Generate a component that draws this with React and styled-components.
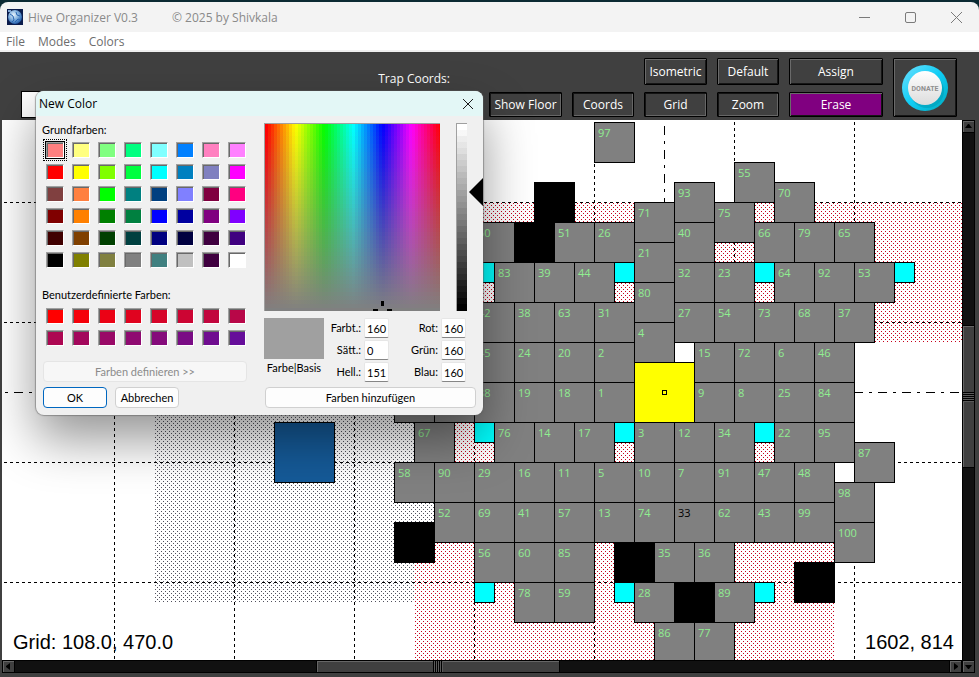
import React from "react";
import styled, { createGlobalStyle, css } from "styled-components";

const UI_FONT = `"Open Sans", "Noto Sans", sans-serif`;
const DIALOG_FONT = `Lato, "Open Sans", sans-serif`;
const CHROME = "#404040";

const GlobalStyle = createGlobalStyle`
  *, *::before, *::after { box-sizing: border-box; }
  html, body { margin: 0; padding: 0; background: #0b2a33; }
  button, input { font-family: inherit; font-size: inherit; margin: 0; }
`;

/* ---------- data ---------- */

const UNIT = 20;
const ORIGIN_X = 12;
const ORIGIN_Y = 2;

// [column, row, label]
const HIVES = [
  [29, 0, "97"], [36, 2, "55"], [33, 3, "93"], [38, 3, "70"],
  [31, 4, "71"], [35, 4, "75"],
  [23, 5, "50"], [27, 5, "51"], [29, 5, "26"], [33, 5, "40"], [37, 5, "66"], [39, 5, "79"], [41, 5, "65"],
  [31, 6, "21"],
  [24, 7, "83"], [26, 7, "39"], [28, 7, "44"], [33, 7, "32"], [35, 7, "23"], [38, 7, "64"], [40, 7, "92"], [42, 7, "53"],
  [31, 8, "80"],
  [23, 9, "42"], [25, 9, "38"], [27, 9, "63"], [29, 9, "31"], [33, 9, "27"], [35, 9, "54"], [37, 9, "73"], [39, 9, "68"], [41, 9, "37"],
  [31, 10, "4"],
  [23, 11, "45"], [25, 11, "24"], [27, 11, "20"], [29, 11, "2"], [34, 11, "15"], [36, 11, "72"], [38, 11, "6"], [40, 11, "46"],
  [19, 13, ""], [21, 13, ""], [23, 13, "88"], [25, 13, "19"], [27, 13, "18"], [29, 13, "1"], [34, 13, "9"], [36, 13, "8"], [38, 13, "25"], [40, 13, "84"],
  [20, 15, "67"], [24, 15, "76"], [26, 15, "14"], [28, 15, "17"], [31, 15, "3"], [33, 15, "12"], [35, 15, "34"], [38, 15, "22"], [40, 15, "95"],
  [42, 16, "87"],
  [19, 17, "58"], [21, 17, "90"], [23, 17, "29"], [25, 17, "16"], [27, 17, "11"], [29, 17, "5"], [31, 17, "10"], [33, 17, "7"], [35, 17, "91"], [37, 17, "47"], [39, 17, "48"],
  [41, 18, "98"],
  [21, 19, "52"], [23, 19, "69"], [25, 19, "41"], [27, 19, "57"], [29, 19, "13"], [31, 19, "74"], [33, 19, "33"], [35, 19, "62"], [37, 19, "43"], [39, 19, "99"],
  [41, 20, "100"],
  [23, 21, "56"], [25, 21, "60"], [27, 21, "85"], [32, 21, "35"], [34, 21, "36"],
  [25, 23, "78"], [27, 23, "59"], [31, 23, "28"], [35, 23, "89"],
  [32, 25, "86"], [34, 25, "77"],
];

const ROCKS = [[26, 3], [25, 5], [19, 20], [30, 21], [39, 22], [33, 23]];
const FLAGS = [
  [23, 7], [30, 7], [37, 7], [44, 7], [23, 15], [30, 15], [37, 15], [23, 23], [30, 23], [37, 23],
];

const BASE_COLORS = [
  "#ff8080", "#ffff80", "#80ff80", "#00ff80", "#80ffff", "#0080ff", "#ff80c0", "#ff80ff",
  "#ff0000", "#ffff00", "#80ff00", "#00ff40", "#00ffff", "#0080c0", "#8080c0", "#ff00ff",
  "#804040", "#ff8040", "#00ff00", "#008080", "#004080", "#8080ff", "#800040", "#ff0080",
  "#800000", "#ff8000", "#008000", "#008040", "#0000ff", "#0000a0", "#800080", "#8000ff",
  "#400000", "#804000", "#004000", "#004040", "#000080", "#000040", "#400040", "#400080",
  "#000000", "#808000", "#808040", "#808080", "#408080", "#c0c0c0", "#400040", "#ffffff",
];

const CUSTOM_COLORS = Array.from({ length: 16 }, (_, i) => {
  const t = i / 15;
  return `rgb(${Math.round(255 - 153 * t)}, ${Math.round(14 * t)}, ${Math.round(154 * t)})`;
});

const steps = (direction, count, size, colorAt) => {
  const stops = [];
  for (let i = 0; i < count; i += 1) {
    stops.push(`${colorAt(i / (count - 1))} ${i * size}px ${(i + 1) * size}px`);
  }
  return `linear-gradient(${direction}, ${stops.join(", ")})`;
};

const HUES = steps("to right", 59, 3, (t) => `hsl(${Math.round(t * 360)}, 100%, 50%)`);
const FADE = steps("to bottom", 47, 4, (t) => `rgba(128, 128, 128, ${t.toFixed(3)})`);
const LIGHTNESS = steps("to bottom", 31, 6, (t) => `hsl(0, 0%, ${Math.round((1 - t) * 100)}%)`);

/* ---------- window ---------- */

const Window = styled.div`
  position: relative;
  display: flex;
  flex-direction: column;
  height: 100vh;
  min-height: 480px;
  padding-top: 2px;
  overflow: hidden;
  background: #0b2a33;
  font-family: ${UI_FONT};
  font-size: 12px;
`;

const TitleBar = styled.header`
  display: flex;
  align-items: center;
  flex: none;
  height: 30px;
  padding-left: 7px;
  border-radius: 8px 8px 0 0;
  background: #f3f3f3;
  color: #8a8a8a;
`;

const AppTitle = styled.span`
  margin: 0 34px 0 5px;
  white-space: nowrap;
`;

const WindowButtons = styled.div`
  display: flex;
  margin-left: auto;
`;

const WindowButton = styled.button`
  display: grid;
  place-items: center;
  width: 46px;
  height: 28px;
  padding: 0;
  border: 0;
  background: transparent;
  color: #7a7a7a;
`;

const MenuBar = styled.nav`
  display: flex;
  align-items: center;
  gap: 13px;
  flex: none;
  height: 20px;
  padding: 2px 0 0 6px;
  border-bottom: 2px solid #f0f0f0;
  background: #fff;
`;

const MenuItem = styled.button`
  padding: 0;
  border: 0;
  background: transparent;
  color: #6d6d6d;
  line-height: 16px;
`;

/* ---------- toolbar ---------- */

const Toolbar = styled.div`
  display: flex;
  flex: none;
  height: 68px;
  padding: 6px 22px 0 21px;
  background: ${CHROME};
  color: #fff;
`;

const NameBox = styled.input`
  align-self: flex-end;
  width: 120px;
  height: 27px;
  margin-bottom: 2px;
  border: 1px solid #000;
  background: #fff;
`;

const TrapLabel = styled.div`
  margin: 12px 39px 0 auto;
  line-height: 18px;
  white-space: nowrap;
`;

const ToolGrid = styled.div`
  display: grid;
  grid-template-columns: 73px 62px 63px 62px 94px 64px;
  grid-template-rows: 27px 25px;
  gap: 7px 10px;
  align-content: start;
`;

const ToolButton = styled.button`
  grid-column: ${(p) => p.$col};
  grid-row: ${(p) => p.$row};
  display: grid;
  place-items: center;
  padding: 0;
  border: 1px solid #000;
  border-radius: 1px;
  background: ${(p) => (p.$accent ? "#800080" : CHROME)};
  color: #fff;
  line-height: 16px;
  white-space: nowrap;
  box-shadow: ${(p) =>
    p.$pressed
      ? "inset 1px 1px 0 #141414, inset -1px -1px 0 #666"
      : "inset 1px 1px 0 #6a6a6a, inset -1px -1px 0 #161616"};
`;

/* ---------- map ---------- */

const Workspace = styled.div`
  display: grid;
  grid-template-columns: minmax(0, 1fr) 13px;
  grid-template-rows: minmax(0, 1fr) 13px;
  flex: 1;
  min-height: 0;
  padding: 0 4px 4px 2px;
  background: ${CHROME};
`;

const MapCanvas = styled.main`
  position: relative;
  overflow: hidden;
  background: #fff;
`;

const Terrain = styled.svg`
  position: absolute;
  inset: 0;
  width: 100%;
  height: 100%;
`;

const fills = { hive: "#808080", rock: "#000", flag: "#00ffff", trap: "#ffff00", base: "#155a98" };

const Tile = styled.div`
  position: absolute;
  left: ${(p) => ORIGIN_X + p.$col * UNIT}px;
  top: ${(p) => ORIGIN_Y + p.$row * UNIT}px;
  width: ${(p) => p.$span * UNIT + 1}px;
  height: ${(p) => p.$span * UNIT + 1}px;
  padding: 2px 3px;
  border: 1px solid #000;
  background: ${(p) => fills[p.$kind]};
  color: ${(p) => (p.$dark ? "#000" : "#90ee90")};
  font-size: 11px;
  line-height: 16px;
  ${(p) =>
    p.$kind === "trap" &&
    css`
      display: grid;
      place-items: center;
    `}
`;

const TrapCenter = styled.span`
  width: 5px;
  height: 5px;
  border: 1px solid #000;
`;

const Readout = styled.output`
  position: absolute;
  bottom: 6px;
  ${(p) => (p.$side === "left" ? "left: 11px;" : "right: 8px;")}
  color: #000;
  font-family: "Liberation Sans", Arial, sans-serif;
  font-size: 20px;
  line-height: 24px;
`;

/* ---------- scroll bars ---------- */

const Scrollbar = styled.div`
  display: flex;
  flex-direction: ${(p) => (p.$vertical ? "column" : "row")};
  background: #000;
  ${(p) => p.$vertical && "grid-row: 1 / 3; grid-column: 2;"}
`;

const ScrollArrow = styled.button`
  display: grid;
  place-items: center;
  flex: none;
  width: 13px;
  height: 13px;
  padding: 0;
  border: 1px solid #000;
  background: ${CHROME};
  box-shadow: inset 1px 1px 0 #666;
`;

const Trough = styled.div`
  display: flex;
  flex-direction: ${(p) => (p.$vertical ? "column" : "row")};
  flex: 1;
  min-width: 0;
  min-height: 0;
  border: solid #000;
  border-width: ${(p) => (p.$vertical ? "0 1px" : "1px 0")};
  background: #111;
`;

const TroughSpace = styled.div`
  flex: ${(p) => p.$grow} 1 0;
`;

const Thumb = styled.div`
  display: grid;
  place-items: center;
  flex: ${(p) => p.$grow} 1 0;
  border: 1px solid #000;
  background: ${CHROME};
  box-shadow: inset 1px 1px 0 #666;
  ${(p) => (p.$vertical ? "border-width: 1px 0;" : "border-width: 0 1px;")}
`;

const Grip = styled.span`
  width: ${(p) => (p.$vertical ? "100%" : "10px")};
  height: ${(p) => (p.$vertical ? "10px" : "100%")};
  background: repeating-linear-gradient(
    ${(p) => (p.$vertical ? "to bottom" : "to right")},
    #000 0 1px,
    #5a5a5a 1px 2px
  );
`;

/* ---------- color dialog ---------- */

const Dialog = styled.section`
  position: absolute;
  left: 36px;
  top: 91px;
  display: flex;
  flex-direction: column;
  width: 447px;
  border-radius: 8px;
  overflow: hidden;
  background: #f0f0f0;
  color: #000;
  font-family: ${DIALOG_FONT};
  font-size: 11px;
  box-shadow: 0 0 1px 1px rgba(90, 90, 90, 0.5), 0 24px 50px rgba(0, 0, 0, 0.42);
`;

const DialogTitle = styled.header`
  display: flex;
  align-items: center;
  justify-content: space-between;
  height: 25px;
  padding: 0 9px 0 3px;
  background: #e3f7f6;
  font-family: ${UI_FONT};
  font-size: 12px;
`;

const CloseButton = styled.button`
  display: grid;
  place-items: center;
  padding: 0;
  border: 0;
  background: transparent;
`;

const DialogBody = styled.div`
  display: grid;
  grid-template-columns: 205px minmax(0, 1fr);
  gap: 17px;
  padding: 6px 0 7px 6px;
`;

const Palette = styled.div`
  display: flex;
  flex-direction: column;
`;

const PaletteLabel = styled.div`
  line-height: 16px;
  margin: ${(p) => (p.$spaced ? "19px 0 5px" : "0 0 4px")};
`;

const SwatchGrid = styled.div`
  display: grid;
  grid-template-columns: repeat(8, 18px);
  grid-auto-rows: 16px;
  gap: 6px 8px;
  padding-left: 4px;
`;

const Swatch = styled.button`
  padding: 0;
  border: 1px solid;
  border-color: #a0a0a0 #fff #fff #a0a0a0;
  background: ${(p) => p.$color};
  box-shadow: inset 1px 1px 0 #696969;
  ${(p) =>
    p.$selected &&
    css`
      box-shadow: inset 1px 1px 0 #696969, 0 0 0 1px #000;
      outline: 1px dotted #000;
      outline-offset: 2px;
    `}
`;

const DialogButton = styled.button`
  height: 21px;
  min-width: 64px;
  padding: 0;
  border: 1px solid ${(p) => (p.$primary ? "#0067c0" : "#d0d0d0")};
  border-radius: 4px;
  background: #fdfdfd;
  color: #000;
  line-height: 16px;
  &:disabled {
    border-color: #e5e5e5;
    background: #f7f7f7;
    color: #8b8b8b;
  }
`;

const PaletteActions = styled.div`
  display: grid;
  grid-template-columns: 64px 64px;
  gap: 5px 8px;
  margin: 15px 0 0 1px;
  & > :first-child { grid-column: 1 / 3; width: 204px; }
`;

const Mixer = styled.div`
  display: flex;
  flex-direction: column;
`;

const Pickers = styled.div`
  display: flex;
  gap: 16px;
  margin-top: 1px;
`;

const Spectrum = styled.div`
  position: relative;
  width: 176px;
  height: 188px;
  border: solid #a0a0a0;
  border-width: 1px 0 0 1px;
  background: ${FADE}, ${HUES};
`;

const CrossHair = styled.svg`
  position: absolute;
  left: 108px;
  bottom: 0;
`;

const LightBar = styled.div`
  width: 11px;
  height: 188px;
  border: solid #a0a0a0;
  border-width: 1px 0 0 1px;
  background: ${LIGHTNESS};
`;

const LightPicker = styled.div`
  display: flex;
  flex: 1;
  gap: 2px;
`;

const LightArrow = styled.svg`
  margin-top: 55px;
`;

const Values = styled.div`
  display: grid;
  grid-template-columns: 60px 34px 25px 46px 25px;
  grid-template-rows: repeat(3, 20px);
  gap: 2px 3px;
  margin-top: 7px;
`;

const Preview = styled.div`
  grid-row: 1 / 4;
  display: flex;
  flex-direction: column;
  text-align: center;
  line-height: 18px;
  white-space: nowrap;
`;

const PreviewColor = styled.div`
  height: 41px;
  background: #a0a0a0;
`;

const FieldLabel = styled.label`
  text-align: right;
  line-height: 20px;
`;

const FieldInput = styled.input`
  width: 25px;
  height: 20px;
  padding: 0 0 0 2px;
  border: 1px solid #e6e6e6;
  border-bottom-color: #868686;
  border-radius: 2px;
  background: #fff;
`;

const AddButton = styled(DialogButton)`
  margin: auto 7px 0 1px;
`;

/* ---------- components ---------- */

const AppIcon = () => (
  <svg width="16" height="16" viewBox="0 0 16 16" aria-hidden="true">
    <defs>
      <radialGradient id="globe" cx="40%" cy="35%" r="65%">
        <stop offset="0" stopColor="#e8f4fc" />
        <stop offset="0.5" stopColor="#86b4e0" />
        <stop offset="1" stopColor="#2560ac" />
      </radialGradient>
    </defs>
    <rect width="16" height="16" fill="#0b1c4c" />
    <circle cx="8" cy="8" r="7" fill="url(#globe)" />
    <path d="M3 5l3 2 1 4-2 2M9 3l1 3 3 1M8 13l3-3 2 1" stroke="#2a68b4" fill="none" />
    <path d="M1 1h3v2H1z" fill="#7fa6d4" />
  </svg>
);

const DonateIcon = () => (
  <svg width="48" height="48" viewBox="0 0 48 48" aria-hidden="true">
    <defs>
      <linearGradient id="ring" x1="0" y1="0" x2="1" y2="1">
        <stop offset="0" stopColor="#6fe0ff" />
        <stop offset="0.5" stopColor="#0fcdf5" />
        <stop offset="1" stopColor="#00a9bd" />
      </linearGradient>
      <linearGradient id="knob" x1="0" y1="0" x2="0" y2="1">
        <stop offset="0" stopColor="#ffffff" />
        <stop offset="1" stopColor="#dcdcdc" />
      </linearGradient>
    </defs>
    <circle cx="24" cy="24" r="23" fill="url(#ring)" />
    <circle cx="26" cy="27" r="17" fill="#009fb8" opacity="0.6" />
    <circle cx="24" cy="24" r="17" fill="url(#knob)" />
    <text x="24" y="27" textAnchor="middle" fontFamily="Liberation Sans Narrow, Roboto, sans-serif" fontSize="7" fontWeight="700" fill="#8f8f8f">
      DONATE
    </text>
  </svg>
);

const arrows = {
  up: "M0 5h7L4 1H3z",
  down: "M0 2h7L4 6H3z",
  left: "M5 0v7L1 4V3z",
  right: "M2 0v7L6 4V3z",
};

const Arrow = ({ dir }) => (
  <ScrollArrow aria-label={`Scroll ${dir}`}>
    <svg width="7" height="7" aria-hidden="true">
      <path d={arrows[dir]} fill="#000" />
    </svg>
  </ScrollArrow>
);

const MapTerrain = () => (
  <Terrain aria-hidden="true" shapeRendering="crispEdges">
    <defs>
      <pattern id="stipple-red" width="4" height="4" patternUnits="userSpaceOnUse">
        <path d="M1 1h1v1h-1zM3 3h1v1h-1z" fill="#c8001c" />
      </pattern>
      <pattern id="stipple-gray" width="4" height="4" patternUnits="userSpaceOnUse">
        <path d="M1 1h1v1h-1zM3 3h1v1h-1z" fill="#50505c" />
      </pattern>
      <pattern id="dot-x" x="2" width="6" height="1" patternUnits="userSpaceOnUse">
        <rect width="3" height="1" />
      </pattern>
      <pattern id="dot-y" y="2" width="1" height="6" patternUnits="userSpaceOnUse">
        <rect width="1" height="3" />
      </pattern>
      <pattern id="axis-x" x="12" width="24" height="1" patternUnits="userSpaceOnUse">
        <path d="M0 0h9v1H0zM15 0h3v1h-3z" />
      </pattern>
      <pattern id="axis-y" y="6" width="1" height="24" patternUnits="userSpaceOnUse">
        <path d="M0 0v9h1V0zM0 15v3h1v-3z" />
      </pattern>
    </defs>
    <path d="M152 202H432V402H412V482H152z" fill="url(#stipple-gray)" />
    <rect x="432" y="82" width="100%" height="140" fill="url(#stipple-red)" />
    <rect x="452" y="302" width="400" height="40" fill="url(#stipple-red)" />
    <rect x="413" y="422" width="419" height="100%" fill="url(#stipple-red)" />
    {[112, 232, 352, 472, 592, 732, 852].map((x) => (
      <rect key={x} x={x} y="2" width="1" height="100%" fill="url(#dot-y)" />
    ))}
    {[82, 202, 342, 462].map((y) => (
      <rect key={y} x="2" y={y} width="100%" height="1" fill="url(#dot-x)" />
    ))}
    <rect x="662" y="6" width="1" height="100%" fill="url(#axis-y)" />
    <rect x="2" y="272" width="100%" height="1" fill="url(#axis-x)" />
  </Terrain>
);

const HiveMap = () => (
  <MapCanvas>
    <MapTerrain />
    {HIVES.map(([col, row, label]) => (
      <Tile key={`${col}-${row}`} $kind="hive" $span={2} $col={col} $row={row} $dark={label === "33"}>
        {label}
      </Tile>
    ))}
    {ROCKS.map(([col, row]) => (
      <Tile key={`${col}-${row}`} $kind="rock" $span={2} $col={col} $row={row} />
    ))}
    {FLAGS.map(([col, row]) => (
      <Tile key={`${col}-${row}`} $kind="flag" $span={1} $col={col} $row={row} />
    ))}
    <Tile $kind="base" $span={3} $col={13} $row={15} />
    <Tile $kind="trap" $span={3} $col={31} $row={12}>
      <TrapCenter />
    </Tile>
    <Readout $side="left">Grid: 108.0, 470.0</Readout>
    <Readout $side="right">1602, 814</Readout>
  </MapCanvas>
);

const Field = ({ id, label, value }) => (
  <>
    <FieldLabel htmlFor={id}>{label}</FieldLabel>
    <FieldInput id={id} defaultValue={value} />
  </>
);

const ColorDialog = () => (
  <Dialog role="dialog" aria-labelledby="color-title">
    <DialogTitle>
      <span id="color-title">New Color</span>
      <CloseButton aria-label="Close">
        <svg width="12" height="12" aria-hidden="true">
          <path d="M1 1L11 11M11 1L1 11" stroke="#1a1a1a" fill="none" />
        </svg>
      </CloseButton>
    </DialogTitle>
    <DialogBody>
      <Palette>
        <PaletteLabel>Grundfarben:</PaletteLabel>
        <SwatchGrid>
          {BASE_COLORS.map((color, i) => (
            <Swatch key={i} $color={color} $selected={i === 0} aria-label={color} />
          ))}
        </SwatchGrid>
        <PaletteLabel $spaced>Benutzerdefinierte Farben:</PaletteLabel>
        <SwatchGrid>
          {CUSTOM_COLORS.map((color) => (
            <Swatch key={color} $color={color} aria-label={color} />
          ))}
        </SwatchGrid>
        <PaletteActions>
          <DialogButton disabled>Farben definieren &gt;&gt;</DialogButton>
          <DialogButton $primary>OK</DialogButton>
          <DialogButton>Abbrechen</DialogButton>
        </PaletteActions>
      </Palette>
      <Mixer>
        <Pickers>
          <Spectrum>
            <CrossHair width="20" height="10" aria-hidden="true">
              <path d="M8 0h3v5H8zM0 8h5v2H0zM14 8h5v2h-5z" />
            </CrossHair>
          </Spectrum>
          <LightPicker>
            <LightBar />
            <LightArrow width="14" height="28" aria-hidden="true">
              <path d="M0 14L14 0V28z" />
            </LightArrow>
          </LightPicker>
        </Pickers>
        <Values>
          <Preview>
            <PreviewColor />
            Farbe|Basis
          </Preview>
          <Field id="hue" label="Farbt.:" value="160" />
          <Field id="red" label="Rot:" value="160" />
          <Field id="sat" label="Sätt.:" value="0" />
          <Field id="green" label="Grün:" value="160" />
          <Field id="lum" label="Hell.:" value="151" />
          <Field id="blue" label="Blau:" value="160" />
        </Values>
        <AddButton>Farben hinzufügen</AddButton>
      </Mixer>
    </DialogBody>
  </Dialog>
);

export default function App() {
  return (
    <>
      <GlobalStyle />
      <Window>
        <TitleBar>
          <AppIcon />
          <AppTitle>Hive Organizer V0.3</AppTitle>
          <span>© 2025 by Shivkala</span>
          <WindowButtons>
            <WindowButton aria-label="Minimize">
              <svg width="11" height="11" aria-hidden="true">
                <rect y="5" width="11" height="1" fill="currentColor" />
              </svg>
            </WindowButton>
            <WindowButton aria-label="Maximize">
              <svg width="11" height="11" viewBox="0 0 22 22" aria-hidden="true">
                <rect x="1" y="1" width="20" height="20" rx="3" fill="none" stroke="currentColor" strokeWidth="2" />
              </svg>
            </WindowButton>
            <WindowButton aria-label="Close window">
              <svg width="11" height="11" aria-hidden="true">
                <path d="M0 0L11 11M11 0L0 11" stroke="currentColor" fill="none" />
              </svg>
            </WindowButton>
          </WindowButtons>
        </TitleBar>
        <MenuBar>
          <MenuItem>File</MenuItem>
          <MenuItem>Modes</MenuItem>
          <MenuItem>Colors</MenuItem>
        </MenuBar>
        <Toolbar>
          <NameBox aria-label="Name" />
          <TrapLabel>Trap Coords:</TrapLabel>
          <ToolGrid>
            <ToolButton $col="3" $row="1">Isometric</ToolButton>
            <ToolButton $col="4" $row="1">Default</ToolButton>
            <ToolButton $col="5" $row="1">Assign</ToolButton>
            <ToolButton $col="6" $row="1 / 3" aria-label="Donate">
              <DonateIcon />
            </ToolButton>
            <ToolButton $col="1" $row="2" $pressed>Show Floor</ToolButton>
            <ToolButton $col="2" $row="2" $pressed>Coords</ToolButton>
            <ToolButton $col="3" $row="2" $pressed>Grid</ToolButton>
            <ToolButton $col="4" $row="2" $pressed>Zoom</ToolButton>
            <ToolButton $col="5" $row="2" $accent>Erase</ToolButton>
          </ToolGrid>
        </Toolbar>
        <Workspace>
          <HiveMap />
          <Scrollbar $vertical>
            <Arrow dir="up" />
            <Trough $vertical>
              <TroughSpace $grow={193} />
              <Thumb $vertical $grow={141}>
                <Grip $vertical />
              </Thumb>
              <TroughSpace $grow={193} />
            </Trough>
            <Arrow dir="down" />
          </Scrollbar>
          <Scrollbar>
            <Arrow dir="left" />
            <Trough>
              <TroughSpace $grow={302} />
              <Thumb $grow={242}>
                <Grip />
              </Thumb>
              <TroughSpace $grow={390} />
            </Trough>
            <Arrow dir="right" />
          </Scrollbar>
        </Workspace>
        <ColorDialog />
      </Window>
    </>
  );
}
